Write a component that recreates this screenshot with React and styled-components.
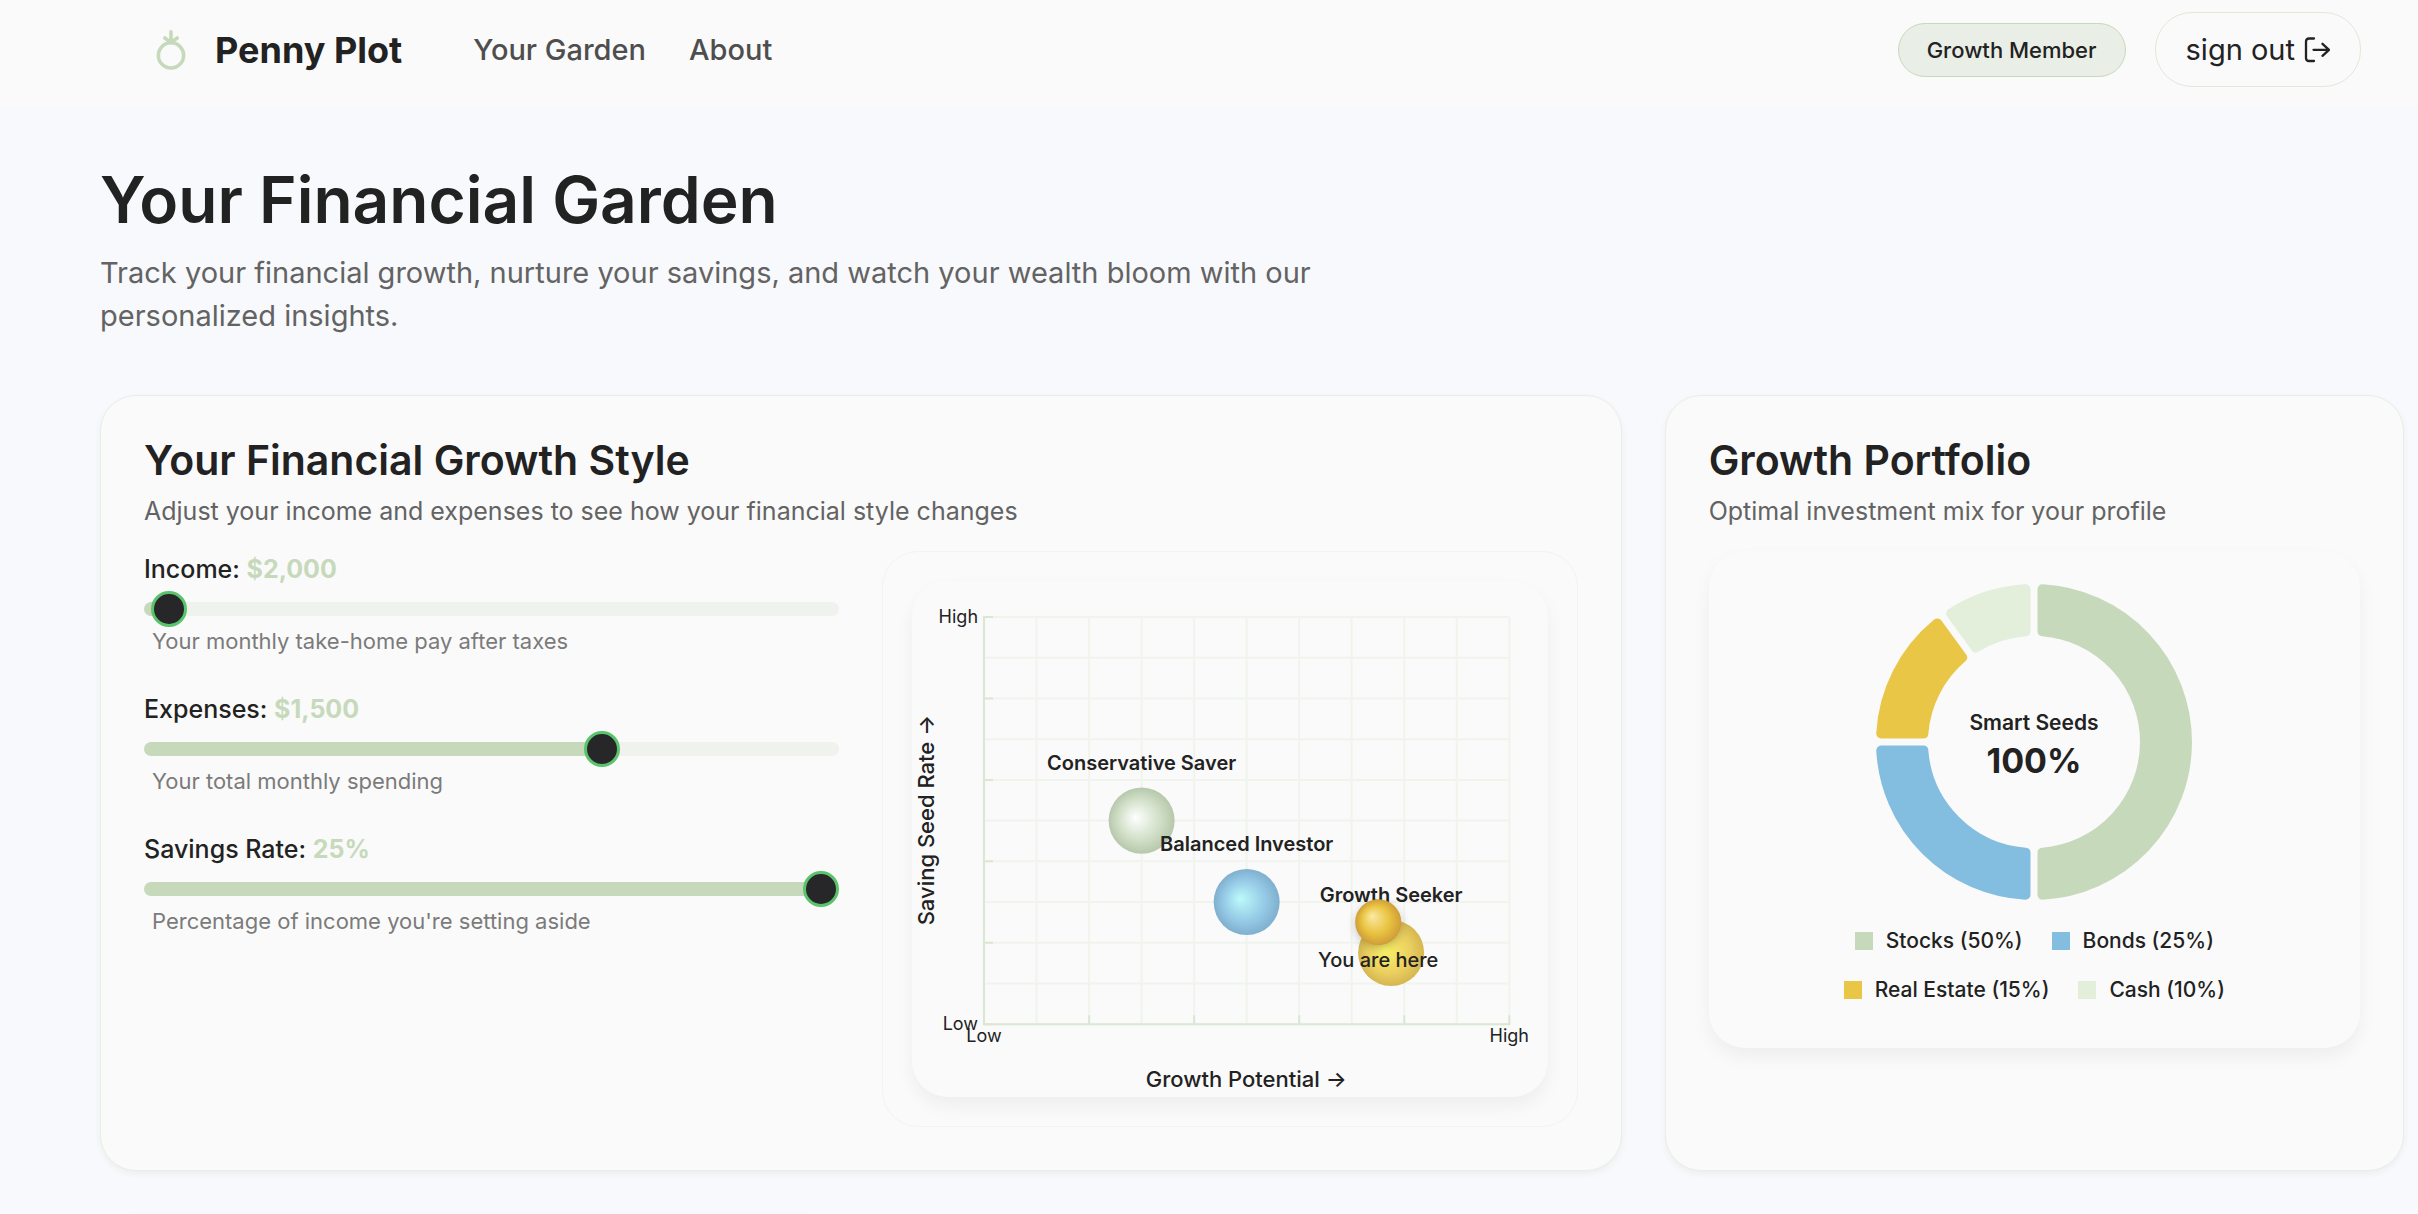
import { useState } from 'react';
import styled, { createGlobalStyle } from 'styled-components';

const portfolio = [
  { name: 'Stocks', share: 50, color: '#c7d9bb' },
  { name: 'Bonds', share: 25, color: '#83bee0' },
  { name: 'Real Estate', share: 15, color: '#e9c645' },
  { name: 'Cash', share: 10, color: '#e3eedb' },
];

const styles = [
  { name: 'Conservative Saver', x: 3, y: 5, fill: 'url(#saver)' },
  { name: 'Balanced Investor', x: 5, y: 7, fill: 'url(#balanced)' },
  { name: 'Growth Seeker', x: 7.75, y: 8.25, fill: 'url(#seeker)' },
];

const steps = [0, 1, 2, 3, 4, 5, 6, 7, 8, 9, 10];
const plotX = (value) => 72 + value * 52.5;
const plotY = (value) => 36 + value * 40.7;

const LogoIcon = () => (
  <svg width='32' height='42' viewBox='0 0 32 42' fill='none' aria-hidden='true'>
    <g stroke='#c7d9bb' strokeWidth='3.6' strokeLinecap='round'>
      <circle cx='16' cy='26.4' r='12.6' />
      <path d='M16 2.9v10M9.8 9l6.2 4.6L22.2 9' />
    </g>
  </svg>
);

const SignOutIcon = () => (
  <svg width='26' height='26' viewBox='0 0 26 26' fill='none' aria-hidden='true'>
    <g stroke='#222' strokeWidth='2.3' strokeLinecap='round' strokeLinejoin='round'>
      <path d='M10 1.5H5Q2 1.5 2 4.5v16.5Q2 24 5 24H10' />
      <path d='M9.5 12.8h15.5M18.5 6.8l6.5 6-6.5 6' />
    </g>
  </svg>
);

const Slider = ({ id, label, hint, min, max, start, format }) => {
  const [value, setValue] = useState(start);
  const ratio = (value - min) / (max - min);

  return (
    <Field>
      <FieldLabel htmlFor={id}>
        {label}: <FieldValue>{format(value)}</FieldValue>
      </FieldLabel>
      <Range
        type='range'
        id={id}
        min={min}
        max={max}
        value={value}
        onChange={(e) => setValue(Number(e.target.value))}
        style={{ '--fill': `calc(18px + (100% - 36px) * ${ratio})` }}
      />
      <Hint>{hint}</Hint>
    </Field>
  );
};

const StyleChart = () => (
  <Chart viewBox='0 0 635 516' role='img' aria-label='Financial growth style'>
    <defs>
      <radialGradient id='saver' cx='0.5' cy='0.5' r='0.5' fx='0.4' fy='0.45'>
        <stop offset='0' stopColor='#ffffff' />
        <stop offset='0.65' stopColor='#cfdec5' />
        <stop offset='1' stopColor='#b6c8ac' />
      </radialGradient>
      <radialGradient id='balanced' cx='0.5' cy='0.5' r='0.5' fx='0.4' fy='0.45'>
        <stop offset='0' stopColor='#bcfafb' />
        <stop offset='0.65' stopColor='#94c8e5' />
        <stop offset='1' stopColor='#7fb0ce' />
      </radialGradient>
      <radialGradient id='seeker' cx='0.5' cy='0.5' r='0.5' fx='0.4' fy='0.45'>
        <stop offset='0' stopColor='#fbf467' />
        <stop offset='0.65' stopColor='#ebcf60' />
        <stop offset='1' stopColor='#d5b650' />
      </radialGradient>
      <radialGradient id='you' cx='0.5' cy='0.5' r='0.5' fx='0.36' fy='0.36'>
        <stop offset='0' stopColor='#fbeaa6' />
        <stop offset='0.6' stopColor='#e9c341' />
        <stop offset='1' stopColor='#cf9d37' />
      </radialGradient>
    </defs>
    <g stroke='#f0f4ed' strokeWidth='2'>
      {steps.map((step) => (
        <path
          key={step}
          d={`M${plotX(step)} 36V443M72 ${plotY(step)}H597`}
        />
      ))}
    </g>
    <g stroke='#dae7d3' strokeWidth='2'>
      <path d='M72 35V443H598' fill='none' />
      {steps
        .filter((step) => step % 2 === 0)
        .map((step) => (
          <path
            key={step}
            d={`M${plotX(step)} 443v-9M72 ${plotY(step)}h9`}
          />
        ))}
    </g>
    <TickLabel x='66' y='42' textAnchor='end'>High</TickLabel>
    <TickLabel x='66' y='449' textAnchor='end'>Low</TickLabel>
    <TickLabel x='72' y='461'>Low</TickLabel>
    <TickLabel x='597' y='461'>High</TickLabel>
    <AxisLabel x='334' y='506'>Growth Potential →</AxisLabel>
    <AxisLabel transform='translate(22 239) rotate(-90)'>
      Saving Seed Rate →
    </AxisLabel>
    {styles.map((item) => (
      <circle
        key={item.name}
        cx={plotX(item.x)}
        cy={plotY(item.y)}
        r='33'
        fill={item.fill}
      />
    ))}
    {styles.map((item) => (
      <BubbleLabel key={item.name} x={plotX(item.x)} y={plotY(item.y) - 51}>
        {item.name}
      </BubbleLabel>
    ))}
    <YouDot cx='466' cy='341' r='23' fill='url(#you)' />
    <YouLabel x='466' y='386'>You are here</YouLabel>
  </Chart>
);

// each slice is drawn 5px smaller and stroked with 10px to round its corners
const slicePath = (from, to) => {
  const outer = 153;
  const inner = 111;
  const gap = 8.5;
  const point = (radius, angle) =>
    `${radius * Math.sin(angle)} ${-radius * Math.cos(angle)}`;
  const a = from * 2 * Math.PI;
  const b = to * 2 * Math.PI;
  const outerGap = Math.asin(gap / outer);
  const innerGap = Math.asin(gap / inner);

  return `M${point(outer, a + outerGap)}
    A${outer} ${outer} 0 0 1 ${point(outer, b - outerGap)}
    L${point(inner, b - innerGap)}
    A${inner} ${inner} 0 0 0 ${point(inner, a + innerGap)}Z`;
};

const Donut = () => {
  let total = 0;

  return (
    <DonutSvg viewBox='-158 -158 316 316' role='img' aria-label='Investment mix'>
      {portfolio.map((item) => {
        const from = total / 100;
        total += item.share;
        return (
          <path
            key={item.name}
            d={slicePath(from, total / 100)}
            fill={item.color}
            stroke={item.color}
            strokeWidth='10'
            strokeLinejoin='round'
          />
        );
      })}
      <DonutTitle y='-12'>Smart Seeds</DonutTitle>
      <DonutTotal y='31'>100%</DonutTotal>
    </DonutSvg>
  );
};

const App = () => {
  return (
    <>
      <GlobalStyle />
      <Header>
        <Brand href='#'>
          <LogoIcon />
          Penny Plot
        </Brand>
        <Nav>
          <NavLink href='#garden'>Your Garden</NavLink>
          <NavLink href='#about'>About</NavLink>
        </Nav>
        <Account>
          <Badge>Growth Member</Badge>
          <SignOutButton type='button'>
            sign out
            <SignOutIcon />
          </SignOutButton>
        </Account>
      </Header>
      <Main>
        <Title>Your Financial Garden</Title>
        <Intro>
          Track your financial growth, nurture your savings, and watch your
          wealth bloom with our personalized insights.
        </Intro>
        <Grid>
          <Card $span={8}>
            <CardTitle>Your Financial Growth Style</CardTitle>
            <CardText>
              Adjust your income and expenses to see how your financial style
              changes
            </CardText>
            <Columns>
              <Fields>
                <Slider
                  id='income'
                  label='Income'
                  hint='Your monthly take-home pay after taxes'
                  min={1000}
                  max={90000}
                  start={2000}
                  format={(value) => `$${value.toLocaleString('en-US')}`}
                />
                <Slider
                  id='expenses'
                  label='Expenses'
                  hint='Your total monthly spending'
                  min={500}
                  max={2000}
                  start={1500}
                  format={(value) => `$${value.toLocaleString('en-US')}`}
                />
                <Slider
                  id='savings'
                  label='Savings Rate'
                  hint="Percentage of income you're setting aside"
                  min={0}
                  max={25}
                  start={25}
                  format={(value) => `${value}%`}
                />
              </Fields>
              <ChartFrame>
                <Panel>
                  <StyleChart />
                </Panel>
              </ChartFrame>
            </Columns>
          </Card>
          <Card $span={4}>
            <CardTitle>Growth Portfolio</CardTitle>
            <CardText>Optimal investment mix for your profile</CardText>
            <PortfolioPanel>
              <Donut />
              <Legend>
                {portfolio.map((item) => (
                  <LegendItem key={item.name}>
                    <Swatch $color={item.color} />
                    {item.name} ({item.share}%)
                  </LegendItem>
                ))}
              </Legend>
            </PortfolioPanel>
          </Card>
          <Card $span={4} />
        </Grid>
      </Main>
    </>
  );
};

export default App;

const GlobalStyle = createGlobalStyle`
  * {
    box-sizing: border-box;
  }
  body {
    margin: 0;
    background: #f8f9fc;
    color: #222;
    font-family: Inter, 'Liberation Sans', sans-serif;
  }
`;

const Header = styled.header`
  display: flex;
  align-items: center;
  padding: 12px 57px 20px 155px;
  background: #fafafa;
`;

const Brand = styled.a`
  display: flex;
  align-items: center;
  gap: 28px;
  color: #222;
  font-size: 36px;
  font-weight: 700;
  line-height: 42px;
  text-decoration: none;
`;

const Nav = styled.nav`
  display: flex;
  gap: 43px;
  margin-left: 71px;
`;

const NavLink = styled.a`
  color: #4e4e4e;
  font-size: 29px;
  font-weight: 500;
  line-height: 36px;
  text-decoration: none;
`;

const Account = styled.div`
  display: flex;
  align-items: center;
  gap: 29px;
  margin-left: auto;
`;

const Badge = styled.span`
  padding: 12px 28px;
  border: 1px solid #c7d9bb;
  border-radius: 27px;
  background: #e9eee6;
  font-size: 22px;
  font-weight: 500;
  line-height: 28px;
`;

const SignOutButton = styled.button`
  display: flex;
  align-items: center;
  gap: 9px;
  padding: 18px 30px;
  border: 1px solid #dfe9d9;
  border-radius: 37px;
  background: none;
  color: #222;
  font-family: inherit;
  font-size: 29px;
  line-height: 37px;
`;

const Main = styled.main`
  padding: 57px 14px 43px 100px;
`;

const Title = styled.h1`
  margin: 0 0 15px;
  font-size: 64px;
  font-weight: 600;
  line-height: 72px;
`;

const Intro = styled.p`
  max-width: 1240px;
  margin: 0 0 58px;
  color: #636363;
  font-size: 29px;
  line-height: 43px;
`;

const Grid = styled.div`
  display: grid;
  grid-template-columns: repeat(12, 1fr);
  gap: 43px;
`;

const Card = styled.section`
  grid-column: span ${({ $span }) => $span};
  padding: 43px;
  border: 1px solid #e9eee6;
  border-radius: 36px;
  background: #fafafa;
  box-shadow: 0 3px 6px rgba(40, 60, 30, 0.06);
`;

const CardTitle = styled.h2`
  margin: 0 0 11px;
  font-size: 41px;
  font-weight: 600;
  line-height: 43px;
`;

const CardText = styled.p`
  margin: 0 0 22px;
  color: #636363;
  font-size: 25px;
  line-height: 36px;
`;

const Columns = styled.div`
  display: grid;
  grid-template-columns: 1fr 1fr;
  gap: 43px;
`;

const Fields = styled.div`
  display: flex;
  flex-direction: column;
  gap: 35px;
`;

const Field = styled.div`
  display: flex;
  flex-direction: column;
`;

const FieldLabel = styled.label`
  margin-bottom: 4px;
  font-size: 25px;
  font-weight: 500;
  line-height: 36px;
`;

const FieldValue = styled.span`
  color: #c7d9bb;
  font-weight: 700;
`;

const Range = styled.input`
  width: 100%;
  height: 36px;
  margin: 0;
  appearance: none;
  background: none;

  &::-webkit-slider-runnable-track {
    height: 14px;
    border-radius: 7px;
    background: linear-gradient(
      to right,
      #c7d9bb var(--fill),
      #f0f2ed var(--fill)
    );
  }

  &::-webkit-slider-thumb {
    appearance: none;
    width: 36px;
    height: 36px;
    margin-top: -11px;
    border: 3px solid #5ac46c;
    border-radius: 50%;
    background: #27272a;
  }
`;

const Hint = styled.span`
  padding-left: 8px;
  color: #7b7b7b;
  font-size: 22px;
  line-height: 29px;
`;

const ChartFrame = styled.div`
  padding: 29px;
  border: 1px solid #f2f4f0;
  border-radius: 36px;
`;

const Panel = styled.div`
  border-radius: 36px;
  background: #fafafa;
  box-shadow: 0 9px 18px rgba(0, 0, 0, 0.05);
`;

const PortfolioPanel = styled(Panel)`
  display: flex;
  flex-direction: column;
  align-items: center;
  gap: 23px;
  padding: 33px 43px 40px;
`;

const Chart = styled.svg`
  display: block;
  width: 100%;
`;

const TickLabel = styled.text`
  fill: #222;
  font-size: 18px;
  text-anchor: ${({ textAnchor }) => textAnchor || 'middle'};
`;

const AxisLabel = styled.text`
  fill: #222;
  font-size: 22px;
  font-weight: 500;
  text-anchor: middle;
`;

const BubbleLabel = styled.text`
  fill: #222;
  font-size: 20px;
  font-weight: 600;
  text-anchor: middle;
`;

const YouDot = styled.circle`
  filter: drop-shadow(0 3px 4px rgba(0, 0, 0, 0.2));
`;

const YouLabel = styled(BubbleLabel)`
  font-weight: 500;
`;

const DonutSvg = styled.svg`
  width: 316px;
`;

const DonutTitle = styled.text`
  fill: #222;
  font-size: 21px;
  font-weight: 600;
  text-anchor: middle;
`;

const DonutTotal = styled(DonutTitle)`
  font-size: 34px;
  font-weight: 700;
`;

const Legend = styled.ul`
  display: flex;
  flex-wrap: wrap;
  justify-content: center;
  gap: 13px 29px;
  max-width: 430px;
  margin: 0;
  padding: 0;
  list-style: none;
`;

const LegendItem = styled.li`
  display: flex;
  align-items: center;
  gap: 13px;
  font-size: 21px;
  font-weight: 500;
  line-height: 36px;
`;

const Swatch = styled.span`
  width: 18px;
  height: 18px;
  background: ${({ $color }) => $color};
`;
